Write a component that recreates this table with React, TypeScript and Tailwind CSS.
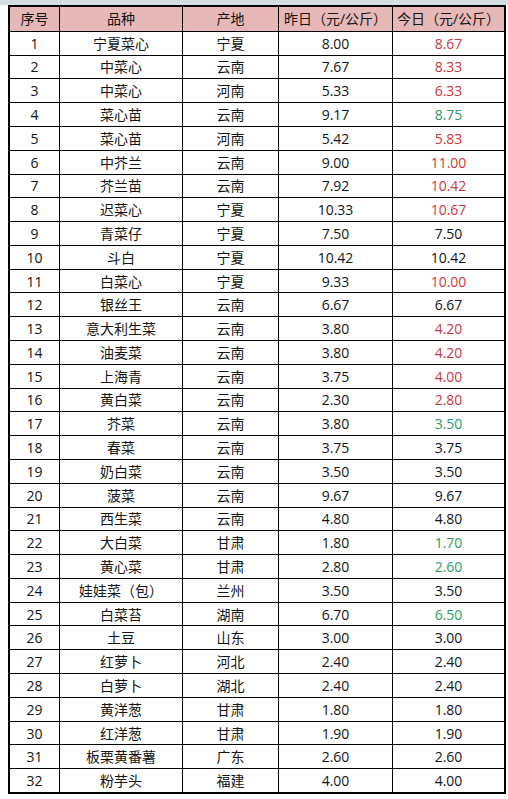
const rows: [number, string, string, string, string, 'r' | 'g' | ''][] = [
  [1, '宁夏菜心', '宁夏', '8.00', '8.67', 'r'],
  [2, '中菜心', '云南', '7.67', '8.33', 'r'],
  [3, '中菜心', '河南', '5.33', '6.33', 'r'],
  [4, '菜心苗', '云南', '9.17', '8.75', 'g'],
  [5, '菜心苗', '河南', '5.42', '5.83', 'r'],
  [6, '中芥兰', '云南', '9.00', '11.00', 'r'],
  [7, '芥兰苗', '云南', '7.92', '10.42', 'r'],
  [8, '迟菜心', '宁夏', '10.33', '10.67', 'r'],
  [9, '青菜仔', '宁夏', '7.50', '7.50', ''],
  [10, '斗白', '宁夏', '10.42', '10.42', ''],
  [11, '白菜心', '宁夏', '9.33', '10.00', 'r'],
  [12, '银丝王', '云南', '6.67', '6.67', ''],
  [13, '意大利生菜', '云南', '3.80', '4.20', 'r'],
  [14, '油麦菜', '云南', '3.80', '4.20', 'r'],
  [15, '上海青', '云南', '3.75', '4.00', 'r'],
  [16, '黄白菜', '云南', '2.30', '2.80', 'r'],
  [17, '芥菜', '云南', '3.80', '3.50', 'g'],
  [18, '春菜', '云南', '3.75', '3.75', ''],
  [19, '奶白菜', '云南', '3.50', '3.50', ''],
  [20, '菠菜', '云南', '9.67', '9.67', ''],
  [21, '西生菜', '云南', '4.80', '4.80', ''],
  [22, '大白菜', '甘肃', '1.80', '1.70', 'g'],
  [23, '黄心菜', '甘肃', '2.80', '2.60', 'g'],
  [24, '娃娃菜（包）', '兰州', '3.50', '3.50', ''],
  [25, '白菜苔', '湖南', '6.70', '6.50', 'g'],
  [26, '土豆', '山东', '3.00', '3.00', ''],
  [27, '红萝卜', '河北', '2.40', '2.40', ''],
  [28, '白萝卜', '湖北', '2.40', '2.40', ''],
  [29, '黄洋葱', '甘肃', '1.80', '1.80', ''],
  [30, '红洋葱', '甘肃', '1.90', '1.90', ''],
  [31, '板栗黄番薯', '广东', '2.60', '2.60', ''],
  [32, '粉芋头', '福建', '4.00', '4.00', ''],
]

const headers = ['序号', '品种', '产地', '昨日（元/公斤）', '今日（元/公斤）']

export default function App() {
  return (
    <div
      className="w-[508px] h-[799px] bg-white text-[#141414] text-[14px] overflow-hidden"
      style={{ fontFamily: '"Open Sans", "Noto Sans CJK SC", sans-serif' }}
    >
      <div className="h-[5px] bg-[#d5dee3]" />
      <div className="ml-[8px] w-[498px] h-[789px] border-2 border-black grid grid-cols-[49px_123px_96px_114px_112px] grid-rows-[repeat(33,minmax(0,1fr))]">
        {headers.map((h, i) => (
          <div
            key={h}
            className={`bg-[#e6b8b7] flex items-center justify-center whitespace-nowrap ${i > 0 ? 'border-l border-black' : ''}`}
          >
            {h}
          </div>
        ))}
        {rows.map(([n, name, origin, y, t, c]) => (
          <Row key={n} n={n} name={name} origin={origin} y={y} t={t} c={c} />
        ))}
      </div>
    </div>
  )
}

function Row({ n, name, origin, y, t, c }: { n: number; name: string; origin: string; y: string; t: string; c: string }) {
  const cell = 'border-t border-black flex items-center justify-center whitespace-nowrap'
  const color = c === 'r' ? 'text-[#c8383f]' : c === 'g' ? 'text-[#2f9a62]' : ''
  return (
    <>
      <div className={cell}>{n}</div>
      <div className={`${cell} border-l`}>{name}</div>
      <div className={`${cell} border-l`}>{origin}</div>
      <div className={`${cell} border-l`}>{y}</div>
      <div className={`${cell} border-l ${color}`}>{t}</div>
    </>
  )
}
